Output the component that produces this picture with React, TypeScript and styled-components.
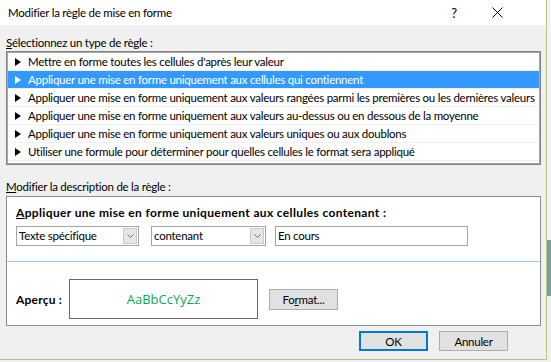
import React from 'react'
import styled, { createGlobalStyle } from 'styled-components'

const GlobalStyle = createGlobalStyle`
  html, body {
    margin: 0;
    padding: 0;
  }

  body {
    background: #f0f0f0;
    font-family: Lato, "Segoe UI", "Liberation Sans", sans-serif;
    font-size: 11.5px;
    letter-spacing: -0.25px;
    color: #000;
  }
`

const rules = [
  "Mettre en forme toutes les cellules d'après leur valeur",
  'Appliquer une mise en forme uniquement aux cellules qui contiennent',
  'Appliquer une mise en forme uniquement aux valeurs rangées parmi les premières ou les dernières valeurs',
  'Appliquer une mise en forme uniquement aux valeurs au-dessus ou en dessous de la moyenne',
  'Appliquer une mise en forme uniquement aux valeurs uniques ou aux doublons',
  'Utiliser une formule pour déterminer pour quelles cellules le format sera appliqué'
]

const Screen = styled.div`
  display: flex;
  width: 551px;
  height: 362px;
  overflow: hidden;
`

const Dialog = styled.div`
  flex-shrink: 0;
  display: flex;
  flex-direction: column;
  width: 546px;
  height: 359px;
  background: #f0f0f0;
  border-right: 1px solid #b7c47c;
  border-bottom: 1px solid #b7c47c;
`

// a strip of the Excel sheet that shows behind the dialog
const Backdrop = styled.div`
  flex: 1;
  background: linear-gradient(
    to bottom,
    #f3f3f3 0 240px,
    #74a19d 240px 296px,
    #f0f0f0 296px
  );
`

const TitleBar = styled.div`
  display: flex;
  align-items: center;
  height: 25px;
  padding-left: 8px;
  padding-right: 26px;
  background: #fff;
`

const Title = styled.div`
  flex: 1;
`

const HelpButton = styled.div`
  width: 30px;
  text-align: center;
  font-size: 13px;
`

const CloseButton = styled.div`
  display: flex;
  align-items: center;
  justify-content: center;
  width: 46px;
  margin-left: 5px;
`

const Body = styled.div`
  display: flex;
  flex-direction: column;
  padding: 0 5px 0 6px;
`

const SectionLabel = styled.div<{ $top: number }>`
  height: 16px;
  line-height: 16px;
  margin-top: ${props => props.$top}px;
  margin-bottom: ${props => (props.$top > 10 ? 1 : 0)}px;
`

const RuleList = styled.div`
  box-sizing: border-box;
  height: 114px;
  padding: 1px;
  background: #fff;
  border: 1px solid #828282;
  box-shadow: inset 0 0 0 1px #a8a8a8;
`

const RuleRow = styled.div<{ $selected?: boolean }>`
  box-sizing: border-box;
  display: flex;
  align-items: center;
  height: 18px;
  padding-left: 7px;
  white-space: nowrap;
  border-bottom: 1px solid #f0f0f0;
  background: ${props => (props.$selected ? '#3399ff' : '#fff')};
  color: ${props => (props.$selected ? '#fff' : '#000')};
`

const Arrow = styled.span`
  width: 0;
  height: 0;
  margin-right: 7px;
  border-left: 6px solid currentColor;
  border-top: 4px solid transparent;
  border-bottom: 4px solid transparent;
`

const Panel = styled.div`
  box-sizing: border-box;
  height: 130px;
  background: #fff;
  border: 1px solid #8c8c8c;
`

const RuleSection = styled.div`
  padding: 8px 9px 15px;
`

const Heading = styled.div`
  height: 16px;
  line-height: 16px;
  margin-bottom: 5px;
  font-size: 12px;
  font-weight: 700;
  letter-spacing: 0.35px;
`

const Controls = styled.div`
  display: flex;
  height: 20px;
`

const Select = styled.div<{ $width: number; $gap: number }>`
  box-sizing: border-box;
  display: flex;
  width: ${props => props.$width}px;
  margin-right: ${props => props.$gap}px;
  padding: 1px 1px 1px 2px;
  border: 1px solid #a5a5a5;
`

const SelectValue = styled.div`
  flex: 1;
  line-height: 16px;
`

const SelectArrow = styled.div`
  box-sizing: border-box;
  display: flex;
  align-items: center;
  justify-content: center;
  width: 14px;
  background: #e6e6e6;
  border: 1px solid #c9c9c9;
`

const TextInput = styled.div`
  box-sizing: border-box;
  width: 193px;
  padding-left: 2px;
  line-height: 18px;
  border: 1px solid #a5a5a5;
`

const Separator = styled.div`
  height: 1px;
  background: #99c8fb;
`

const PreviewSection = styled.div`
  display: flex;
  align-items: center;
  padding: 17px 9px 6px;
`

const PreviewLabel = styled.div`
  width: 53px;
  font-size: 12px;
  font-weight: 700;
  letter-spacing: 0.2px;
`

const PreviewBox = styled.div`
  box-sizing: border-box;
  display: flex;
  align-items: center;
  justify-content: center;
  width: 189px;
  height: 40px;
  background: #fff;
  border: 1px solid #6a6a6a;
  color: #10a855;
  font-family: "Open Sans", "Noto Sans", sans-serif;
  font-size: 13px;
  letter-spacing: 0;
`

const Button = styled.div<{ $default?: boolean }>`
  box-sizing: border-box;
  display: flex;
  align-items: center;
  justify-content: center;
  width: 69px;
  height: 20px;
  background: #e1e1e1;
  border: ${props => (props.$default ? '2px solid #0078d7' : '1px solid #adadad')};
`

const FormatButton = styled(Button)`
  height: 21px;
  margin-left: 11px;
`

const Footer = styled.div`
  display: flex;
  justify-content: flex-end;
  gap: 11px;
  margin-top: 5px;
  padding-right: 33px;
`

const Chevron = () => (
  <svg width="7" height="4" viewBox="0 0 7 4">
    <polyline points="0.5,0.5 3.5,3.5 6.5,0.5" fill="none" stroke="#707070" strokeWidth="1" />
  </svg>
)

const CloseIcon = () => (
  <svg width="11" height="11" viewBox="0 0 11 11">
    <path d="M0.5 0.5 L10.5 10.5 M10.5 0.5 L0.5 10.5" stroke="#000" strokeWidth="1" />
  </svg>
)

export default function App() {
  return (
    <>
      <GlobalStyle />
      <Screen>
        <Dialog>
          <TitleBar>
            <Title>Modifier la règle de mise en forme</Title>
            <HelpButton>?</HelpButton>
            <CloseButton>
              <CloseIcon />
            </CloseButton>
          </TitleBar>

          <Body>
            <SectionLabel $top={10}>
              <u>S</u>électionnez un type de règle :
            </SectionLabel>
            <RuleList>
              {rules.map((rule, i) => (
                <RuleRow key={rule} $selected={i === 1}>
                  <Arrow />
                  {rule}
                </RuleRow>
              ))}
            </RuleList>

            <SectionLabel $top={14}>
              <u>M</u>odifier la description de la règle :
            </SectionLabel>
            <Panel>
              <RuleSection>
                <Heading>
                  <u>A</u>ppliquer une mise en forme uniquement aux cellules contenant :
                </Heading>
                <Controls>
                  <Select $width={123} $gap={12}>
                    <SelectValue>Texte spécifique</SelectValue>
                    <SelectArrow>
                      <Chevron />
                    </SelectArrow>
                  </Select>
                  <Select $width={115} $gap={9}>
                    <SelectValue>contenant</SelectValue>
                    <SelectArrow>
                      <Chevron />
                    </SelectArrow>
                  </Select>
                  <TextInput>En cours</TextInput>
                </Controls>
              </RuleSection>
              <Separator />
              <PreviewSection>
                <PreviewLabel>Aperçu :</PreviewLabel>
                <PreviewBox>AaBbCcYyZz</PreviewBox>
                <FormatButton>
                  Fo<u>r</u>mat...
                </FormatButton>
              </PreviewSection>
            </Panel>

            <Footer>
              <Button $default>OK</Button>
              <Button>Annuler</Button>
            </Footer>
          </Body>
        </Dialog>
        <Backdrop />
      </Screen>
    </>
  )
}
